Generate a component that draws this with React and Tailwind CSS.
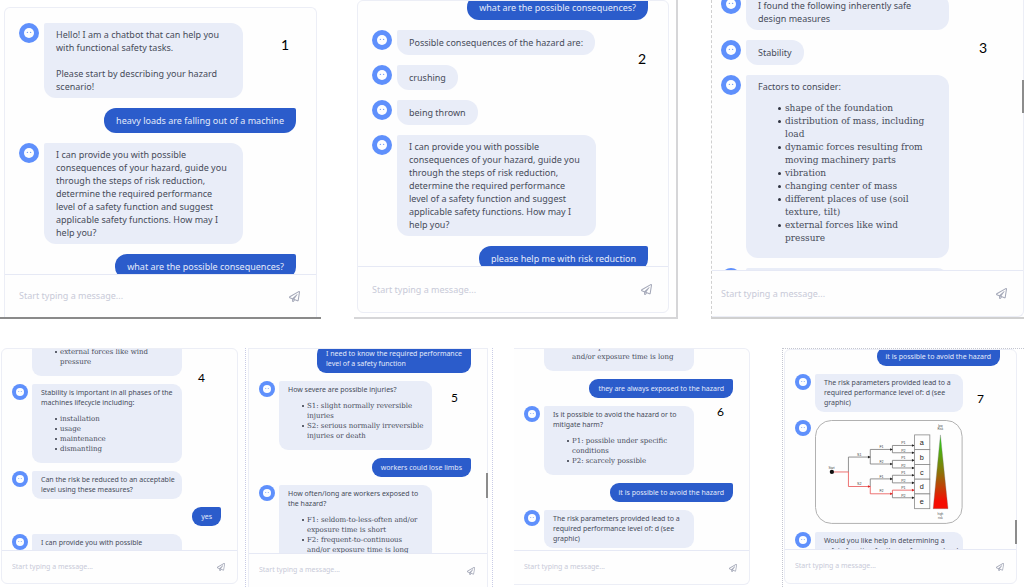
import React, { useLayoutEffect, useRef } from 'react';
import clsx from 'clsx';
import { FaRegPaperPlane } from 'react-icons/fa';

const OPTIONS = 'I can provide you with possible\nconsequences of your hazard, guide you\nthrough the steps of risk reduction,\ndetermine the required performance\nlevel of a safety function and suggest\napplicable safety functions. How may I\nhelp you?';
const RISK_RESULT = 'The risk parameters provided lead to a\nrequired performance level of: d (see\ngraphic)';

// Large chats (top row)
const chat1 = [
  { text: 'Hello! I am a chatbot that can help you\nwith functional safety tasks.\n\nPlease start by describing your hazard\nscenario!', wide: true },
  { user: true, text: 'heavy loads are falling out of a machine' },
  { text: OPTIONS, wide: true },
  { user: true, text: 'what are the possible consequences?' },
];

const chat2 = [
  { user: true, text: 'what are the possible consequences?' },
  { text: 'Possible consequences of the hazard are:' },
  { text: 'crushing' },
  { text: 'being thrown' },
  { text: OPTIONS, wide: true },
  { user: true, text: 'please help me with risk reduction' },
];

const chat3 = [
  { text: 'I found the following inherently safe\ndesign measures', wide: true },
  { text: 'Stability' },
  {
    text: 'Factors to consider:',
    wide: true,
    list: [
      'shape of the foundation',
      'distribution of mass, including\nload',
      'dynamic forces resulting from\nmoving machinery parts',
      'vibration',
      'changing center of mass',
      'different places of use (soil\ntexture, tilt)',
      'external forces like wind\npressure',
    ],
  },
  { text: '', wide: true },
];

// Small chats (bottom row)
const chat4 = [
  { wide: true, list: ['different places of use (soil\ntexture, tilt)', 'external forces like wind\npressure'] },
  {
    text: 'Stability is important in all phases of the\nmachines lifecycle including:',
    wide: true,
    list: ['installation', 'usage', 'maintenance', 'dismantling'],
  },
  { text: 'Can the risk be reduced to an acceptable\nlevel using these measures?', wide: true },
  { user: true, text: 'yes' },
  { text: OPTIONS, wide: true },
];

const chat5 = [
  { user: true, text: 'I need to know the required performance\nlevel of a safety function' },
  {
    text: 'How severe are possible injuries?',
    wide: true,
    list: ['S1: slight normally reversible\ninjuries', 'S2: serious normally irreversible\ninjuries or death'],
  },
  { user: true, text: 'workers could lose limbs' },
  {
    text: 'How often/long are workers exposed to\nthe hazard?',
    wide: true,
    list: ['F1: seldom-to-less-often and/or\nexposure time is short', 'F2: frequent-to-continuous\nand/or exposure time is long'],
  },
];

const chat6 = [
  { wide: true, list: ['F2: frequent-to-continuous\nand/or exposure time is long'] },
  { user: true, text: 'they are always exposed to the hazard' },
  {
    text: 'Is it possible to avoid the hazard or to\nmitigate harm?',
    wide: true,
    list: ['P1: possible under specific\nconditions', 'P2: scarcely possible'],
  },
  { user: true, text: 'it is possible to avoid the hazard' },
  { text: RISK_RESULT, wide: true },
];

const chat7 = [
  { user: true, text: 'it is possible to avoid the hazard' },
  { text: RISK_RESULT, wide: true },
  { graph: true },
  { text: 'Would you like help in determining a\nsafety function for the performance level', wide: true },
];

function Avatar({ small }) {
  return (
    <svg viewBox="0 0 20 20" className={clsx('shrink-0', small ? 'size-4' : 'size-5')} aria-hidden="true">
      <circle cx="10" cy="10" r="10" fill="#5f90fc" />
      <circle cx="10" cy="10" r="5" fill="#fdfeff" />
      <circle cx="8.4" cy="9.4" r="0.7" fill="#7fa4f5" />
      <circle cx="11.6" cy="9.4" r="0.7" fill="#7fa4f5" />
    </svg>
  );
}

const LEVELS = ['a', 'b', 'c', 'd', 'e'];

// Risk graph: S -> F -> P branches ending in the performance levels
function RiskGraph() {
  const gray = '#777777';
  const red = '#e8504f';
  const leaves = [104, 126, 149, 172, 194, 217, 239, 262];
  const forks = [116, 160, 205, 250];

  return (
    <svg viewBox="27 27 446 314" className="block w-[72%]" role="img" aria-label="Risk graph" fontFamily="Liberation Sans, sans-serif">
      <rect x="28.5" y="28.5" width="443" height="311" rx="48" fill="#fefefe" stroke="#b0b0b0" strokeWidth="3" />
      <g fill="none" strokeWidth="2.4">
        <path d="M128 184V139H194" stroke={gray} />
        <path d="M78 184H128V228H194" stroke={red} />
        <path d="M194 139V116H261M194 139V160H261M194 228V205H261" stroke={gray} />
        <path d="M194 228V250H261" stroke={red} />
        {leaves.map((y, i) => (
          <path key={y} d={`M261 ${forks[i >> 1]}V${y}H328`} stroke={i === 6 ? red : gray} />
        ))}
      </g>
      <circle cx="78" cy="184" r="6.5" fill="#111" />
      {[139, 228].map((y) => (
        <path key={y} d={`M187 ${y - 4}L195 ${y}L187 ${y + 4}Z`} fill={y === 228 ? '#d22' : '#222'} />
      ))}
      {forks.map((y) => (
        <path key={y} d={`M254 ${y - 4}L262 ${y}L254 ${y + 4}Z`} fill={y === 250 ? '#d22' : '#222'} />
      ))}
      {leaves.map((y) => (
        <path key={y} d={`M320 ${y - 4}L328 ${y}L320 ${y + 4}Z`} fill={y === 239 ? '#d22' : '#222'} />
      ))}
      <g fontSize="11" fill="#444" textAnchor="middle">
        <text x="77" y="175" fontSize="9">Start</text>
        <text x="161" y="135">S1</text>
        <text x="161" y="224">S2</text>
        {forks.map((y, i) => (
          <text key={y} x="228" y={y - 4}>{i % 2 ? 'F2' : 'F1'}</text>
        ))}
        {leaves.map((y, i) => (
          <text key={y} x="294" y={y - 3}>{i % 2 ? 'P2' : 'P1'}</text>
        ))}
        <text x="406" y="47" fontSize="9">low</text>
        <text x="406" y="58" fontSize="9">Risk</text>
        <text x="406" y="314" fontSize="9">high</text>
        <text x="406" y="325" fontSize="9">risk</text>
      </g>
      {LEVELS.map((level, i) => (
        <g key={level}>
          <rect x="328" y={72 + i * 44.6} width="46" height="44.6" fill="#fefefe" stroke="#888" strokeWidth="2.4" />
          <text x="350" y={103 + i * 44.6} fontSize="22" fill="#222" textAnchor="middle">{level}</text>
        </g>
      ))}
      <defs>
        <linearGradient id="risk" x1="0" y1="0" x2="0" y2="1">
          <stop offset="0.1" stopColor="#35c414" />
          <stop offset="0.5" stopColor="#8a7508" />
          <stop offset="0.9" stopColor="#f50d02" />
        </linearGradient>
      </defs>
      <path d="M406 72L429 295H384Z" fill="url(#risk)" stroke="#777" strokeWidth="1" />
    </svg>
  );
}

function Bubble({ message, small }) {
  const { user, text, list, wide } = message;
  return (
    <div
      className={clsx(
        'flex flex-col justify-center whitespace-pre font-["Noto_Sans",sans-serif]',
        small ? 'min-h-[19px] rounded-[9px] px-[9px] py-1 text-[7px] leading-[10px]' : 'min-h-[25px] rounded-[12px] px-3 py-[5px] text-[9px] leading-[13px]',
        user ? 'rounded-tr-[2px] bg-[#2b5ccb] text-[#e3eafa]' : 'rounded-tl-[2px] bg-[#e9edf8] text-[#474c5a]',
        wide && 'w-[72%]'
      )}
    >
      {text && <p>{text}</p>}
      {list && (
        <ul
          className={clsx(
            'font-["DejaVu_Serif",serif]',
            small ? 'mt-[6px] mb-[5px] pl-[14px]' : 'mt-[9px] mb-2 pl-5'
          )}
        >
          {list.map((item) => (
            <li
              key={item}
              className={clsx(
                'flex before:shrink-0 before:rounded-full before:bg-[#2f3340]',
                small ? 'gap-[3px] before:mt-1 before:size-[2px]' : 'gap-1 before:mt-[5px] before:size-[3px]'
              )}
            >
              <span>{item}</span>
            </li>
          ))}
        </ul>
      )}
    </div>
  );
}

function Chat({ id, messages, scroll = 0, small, padLeft, className, bodyClass, footClass }) {
  const body = useRef(null);
  const left = padLeft || (small ? 'pl-[10px]' : 'pl-[14px]');

  useLayoutEffect(() => {
    body.current.scrollTop = scroll;
  }, [scroll]);

  return (
    <section className={clsx('border-[#eceef6] bg-[#fefefe]', className)}>
      <div ref={body} className={clsx('overflow-hidden', bodyClass)}>
        <div className={clsx('flex flex-col', left, small ? 'gap-2 pt-3 pr-4' : 'gap-[10px] pt-[14px] pr-5')}>
          {messages.map((message, i) => (
            <div key={i} className={clsx('flex items-start', message.user && 'justify-end', small ? 'gap-1' : 'gap-[5px]')}>
              {!message.user && <Avatar small={small} />}
              {message.graph ? <RiskGraph /> : <Bubble message={message} small={small} />}
            </div>
          ))}
          <div className="h-20 shrink-0" />
        </div>
      </div>
      <form
        className={clsx('flex items-center justify-between border-t border-[#e6e9f5]', left, small ? 'pr-3' : 'pr-4', footClass)}
        onSubmit={(e) => e.preventDefault()}
      >
        <input
          id={`message-${id}`}
          aria-label="Message"
          placeholder="Start typing a message..."
          className={clsx(
            'min-w-0 flex-1 bg-transparent font-["Noto_Sans",sans-serif] text-[#474c5a] outline-none placeholder:text-[#c8cad8]',
            small ? 'text-[7px]' : 'text-[9px]'
          )}
        />
        <button type="submit" aria-label="Send" className="text-[#a4a8b8]">
          <FaRegPaperPlane className={small ? 'size-2' : 'size-[11px]'} />
        </button>
      </form>
    </section>
  );
}

function Label({ className, children }) {
  return <span className={clsx('absolute font-[Lato,sans-serif] leading-4 text-black', className)}>{children}</span>;
}

function Thumb({ className }) {
  return <div className={clsx('absolute w-[2px] bg-[#8c8c8c]', className)} />;
}

export default function App() {
  return (
    <main className="flex min-h-screen flex-col gap-[29px] overflow-hidden bg-white">
      <div className="grid grid-cols-[321fr_324fr_313fr] gap-[33px]">
        <div className="relative border-b-2 border-[#8a8a8a] pt-[7px] pr-1 pl-1">
          <Chat id="1" messages={chat1} className="rounded-t-md border border-b-0 pt-px" bodyClass="h-[265px]" footClass="h-[43px]" />
          <Label className="top-[37px] right-8 text-[14px]">1</Label>
        </div>
        <div className="relative border-r-2 border-b-2 border-[#d6d6d8] pr-[7px] pl-[3px]">
          <Chat id="2" messages={chat2} scroll={20} className="rounded-md border" bodyClass="h-[265px]" footClass="h-[46px]" />
          <Label className="top-[51px] right-[30px] text-[14px]">2</Label>
        </div>
        <div className="relative border-b-2 border-l border-[#d0d0d0] [border-left-style:dashed]">
          <Chat id="3" messages={chat3} scroll={20} padLeft="pl-[9px]" className="rounded-br-md border-r border-b" bodyClass="h-[270px]" footClass="h-[46px]" />
          <Label className="top-[40px] right-[37px] text-[14px]">3</Label>
          <Thumb className="top-[80px] right-0 h-[33px]" />
        </div>
      </div>

      <div className="grid grid-cols-[245fr_269fr_268fr_242fr]">
        <div className="relative pr-[7px] pl-px">
          <Chat id="4" small messages={chat4} scroll={44} className="rounded-md border" bodyClass="h-[201px]" footClass="h-[33px]" />
          <Label className="top-[22px] right-[40px] text-[12px]">4</Label>
        </div>
        <div className="pr-[21px]">
          <div className="relative border-x border-dotted border-[#c9cce6] pr-1 pl-[2px]">
            <Chat id="5" small messages={chat5} scroll={16} className="border border-b-0" bodyClass="h-[204px]" footClass="h-[34px]" />
            <Label className="top-[42px] right-[34px] text-[12px]">5</Label>
            <Thumb className="top-[125px] right-1 h-[25px]" />
          </div>
        </div>
        <div className="relative pr-8">
          <Chat id="6" small messages={chat6} scroll={29} className="rounded-r-md border border-l-0" bodyClass="h-[201px]" footClass="h-[34px]" />
          <Label className="top-[56px] right-[58px] text-[12px]">6</Label>
        </div>
        <div className="relative border-t border-l border-dotted border-[#c4c6d0] pr-[7px] pl-px">
          <Chat id="7" small messages={chat7} scroll={15} className="rounded-md border" bodyClass="h-[199px]" footClass="h-[34px]" />
          <Label className="top-[42px] right-[40px] text-[12px]">7</Label>
          <Thumb className="top-[171px] right-[7px] h-[24px]" />
        </div>
      </div>
    </main>
  );
}
